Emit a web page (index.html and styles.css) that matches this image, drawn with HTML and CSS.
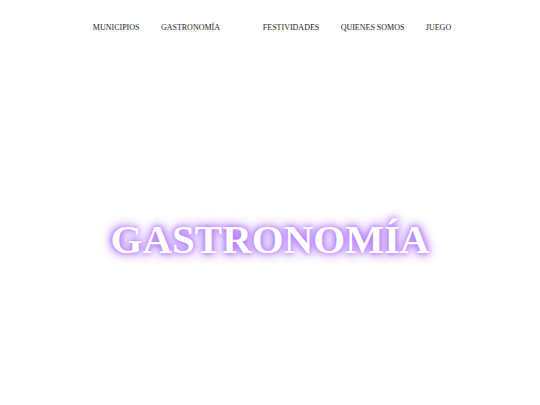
FILE: index.html
```html
<!DOCTYPE html>
<html lang="es">
<head>
<meta charset="utf-8">
<title>Gastronomía</title>
<link rel="stylesheet" href="styles.css">
</head>
<body>
<header class="header">
  <nav class="nav">
    <ul class="nav-list">
      <li class="nav-item">MUNICIPIOS</li>
      <li class="nav-item">GASTRONOMÍA</li>
      <li class="nav-item nav-spacer"></li>
      <li class="nav-item">FESTIVIDADES</li>
      <li class="nav-item">QUIENES SOMOS</li>
      <li class="nav-item">JUEGO</li>
    </ul>
  </nav>
</header>
<main class="hero">
  <h1 class="hero-title">GASTRONOMÍA</h1>
</main>
</body>
</html>
```
FILE: styles.css
```css
html, body {
  margin: 0;
  padding: 0;
  background: #ffffff;
}
body {
  font-family: "Liberation Serif", "Times New Roman", serif;
  width: 540px;
  height: 405px;
  overflow: hidden;
}
.header {
  padding-top: 22px;
}
.nav-list {
  list-style: none;
  margin: 0;
  padding: 0 0 0 4px;
  display: flex;
  justify-content: center;
  gap: 21.4px;
}
.nav-item {
  font-size: 8px;
  line-height: 12px;
  color: #1a1a1a;
}
.hero {
  display: flex;
  justify-content: center;
  padding-top: 179px;
}
.hero-title {
  margin: 0;
  font-size: 41px;
  line-height: 52px;
  font-weight: bold;
  color: #ffffff;
  letter-spacing: 0;
  text-shadow: 0 0 4px #b57bff, 0 0 8px #a35cf5, 0 0 14px #b98cff;
}
```
